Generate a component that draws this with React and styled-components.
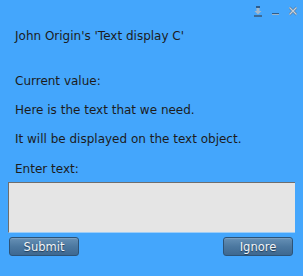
import React from "react";
import styled, { createGlobalStyle } from "styled-components";

const GlobalStyle = createGlobalStyle`
  html, body {
    margin: 0;
    padding: 0;
    background: #44a6fc;
  }
`;

const Dialog = styled.div`
  width: 303px;
  height: 276px;
  background: #44a6fc;
  font-family: "DejaVu Sans", sans-serif;
  font-size: 12px;
  color: #1c1c1c;
  display: flex;
  flex-direction: column;
  box-sizing: border-box;
`;

const TitleBar = styled.div`
  height: 22px;
  display: flex;
  justify-content: flex-end;
  align-items: flex-start;
  gap: 10px;
  padding: 6px 6px 0 0;
  box-sizing: border-box;
`;

const IconButton = styled.span`
  width: ${(p) => p.$w || 8}px;
  height: 11px;
  display: flex;
`;

const Body = styled.div`
  display: flex;
  flex-direction: column;
  padding: 0 0 0 15px;
`;

const Line = styled.div`
  height: 15px;
  line-height: 15px;
  margin-top: ${(p) => p.$gap}px;
  white-space: nowrap;
`;

const TextBox = styled.textarea`
  display: block;
  margin: 5px 0 0 8px;
  width: 287px;
  height: 51px;
  box-sizing: border-box;
  background: #e5e5e5;
  border: none;
  border-top: 1px solid #6e6e6e;
  border-left: 1px solid #6e6e6e;
  border-bottom: 1px solid #9ccdf8;
  resize: none;
  outline: none;
`;

const ButtonRow = styled.div`
  display: flex;
  justify-content: space-between;
  padding: 4px 10px 0 9px;
`;

const Button = styled.button`
  width: 70px;
  height: 19px;
  padding: 0;
  border: 1px solid #2d5377;
  border-radius: 3px;
  background: linear-gradient(#6690b5, #4c78a0 50%, #3e6890);
  color: #f2f5f8;
  font-family: "DejaVu Sans", sans-serif;
  font-size: 11.5px;
  text-shadow: 0 1px 1px #1f3a55;
  box-shadow: inset 0 1px 0 rgba(255, 255, 255, 0.15);
`;

export default function App() {
  return (
    <>
      <GlobalStyle />
      <Dialog>
        <TitleBar>
          <IconButton $w={8}>
            <svg width="8" height="11" viewBox="0 0 8 11">
              <rect x="2" y="0" width="4" height="2" fill="#2d5c8c" />
              <path d="M2.5 2h3v3h2L4 8.5 0.5 5h2z" fill="#a3b7ca" />
              <rect x="0" y="9" width="8" height="2" fill="#3c6a96" />
            </svg>
          </IconButton>
          <IconButton $w={7}>
            <svg width="7" height="11" viewBox="0 0 7 11">
              <rect x="0" y="7" width="7" height="1" fill="#2d5c8c" />
              <rect x="0" y="8" width="7" height="1" fill="#9fb4c8" />
            </svg>
          </IconButton>
          <IconButton $w={8}>
            <svg width="8" height="11" viewBox="0 0 8 11">
              <path d="M0.5 1.5L7.5 8.5M7.5 1.5L0.5 8.5" stroke="#4f78a0" strokeWidth="2.6" />
              <path d="M0.5 1.5L7.5 8.5M7.5 1.5L0.5 8.5" stroke="#c4d0dc" strokeWidth="1.3" />
            </svg>
          </IconButton>
        </TitleBar>
        <Body>
          <Line $gap={7}>John Origin's 'Text display C'</Line>
          <Line $gap={30}>Current value:</Line>
          <Line $gap={14}>Here is the text that we need.</Line>
          <Line $gap={14}>It will be displayed on the text object.</Line>
          <Line $gap={15}>Enter text:</Line>
        </Body>
        <TextBox />
        <ButtonRow>
          <Button>Submit</Button>
          <Button>Ignore</Button>
        </ButtonRow>
      </Dialog>
    </>
  );
}
